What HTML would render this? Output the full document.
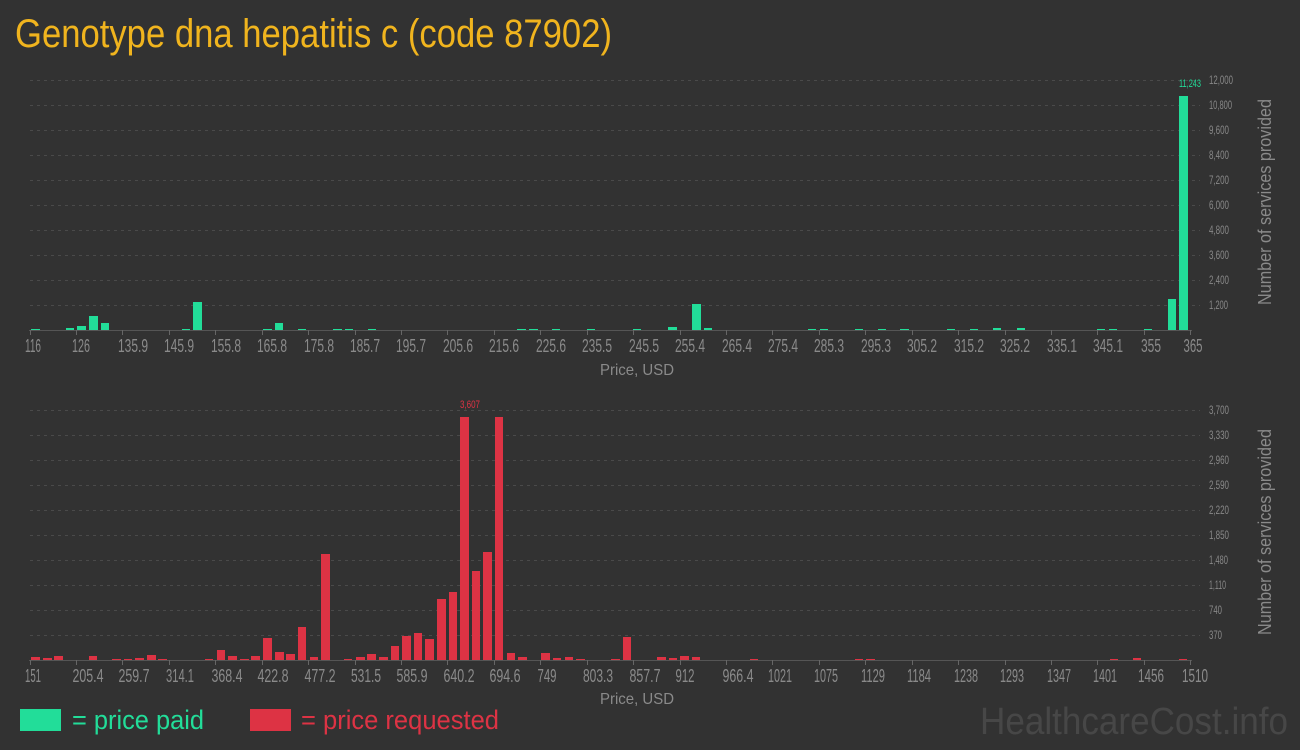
<!DOCTYPE html>
<html><head><meta charset="utf-8"><style>
html,body{margin:0;padding:0;background:#323232;}
svg{display:block}
text{font-family:"Liberation Sans",sans-serif;}
</style></head><body>
<svg width="1300" height="750" xmlns="http://www.w3.org/2000/svg">
<rect width="1300" height="750" fill="#323232"/>
<text x="15" y="47" font-size="40" fill="#f0b41e" textLength="597" lengthAdjust="spacingAndGlyphs">Genotype dna hepatitis c (code 87902)</text>

<g stroke="#4a4a4a" stroke-dasharray="3,4" stroke-width="1">
<line x1="30" x2="1200" y1="80.5" y2="80.5"/><line x1="30" x2="1200" y1="105.5" y2="105.5"/><line x1="30" x2="1200" y1="130.5" y2="130.5"/><line x1="30" x2="1200" y1="155.5" y2="155.5"/><line x1="30" x2="1200" y1="180.5" y2="180.5"/><line x1="30" x2="1200" y1="205.5" y2="205.5"/><line x1="30" x2="1200" y1="230.5" y2="230.5"/><line x1="30" x2="1200" y1="255.5" y2="255.5"/><line x1="30" x2="1200" y1="280.5" y2="280.5"/><line x1="30" x2="1200" y1="305.5" y2="305.5"/>
<line x1="30" x2="1200" y1="410.5" y2="410.5"/><line x1="30" x2="1200" y1="435.5" y2="435.5"/><line x1="30" x2="1200" y1="460.5" y2="460.5"/><line x1="30" x2="1200" y1="485.5" y2="485.5"/><line x1="30" x2="1200" y1="510.5" y2="510.5"/><line x1="30" x2="1200" y1="535.5" y2="535.5"/><line x1="30" x2="1200" y1="560.5" y2="560.5"/><line x1="30" x2="1200" y1="585.5" y2="585.5"/><line x1="30" x2="1200" y1="610.5" y2="610.5"/><line x1="30" x2="1200" y1="635.5" y2="635.5"/>
</g>

<g stroke="#555" stroke-width="1">
<line x1="29" x2="1192" y1="330.5" y2="330.5"/><line x1="29" x2="1192" y1="660.5" y2="660.5"/>
</g>
<g stroke="#666" stroke-width="1">
<path d="M30.5 330v5M76.5 330v5M122.5 330v5M169.5 330v5M215.5 330v5M262.5 330v5M308.5 330v5M355.5 330v5M401.5 330v5M447.5 330v5M494.5 330v5M540.5 330v5M587.5 330v5M633.5 330v5M680.5 330v5M726.5 330v5M772.5 330v5M819.5 330v5M865.5 330v5M912.5 330v5M958.5 330v5M1005.5 330v5M1051.5 330v5M1097.5 330v5M1144.5 330v5M1190.5 330v5"/>
<path d="M30.5 660v5M76.5 660v5M122.5 660v5M169.5 660v5M215.5 660v5M262.5 660v5M308.5 660v5M355.5 660v5M401.5 660v5M447.5 660v5M494.5 660v5M540.5 660v5M587.5 660v5M633.5 660v5M680.5 660v5M726.5 660v5M772.5 660v5M819.5 660v5M865.5 660v5M912.5 660v5M958.5 660v5M1005.5 660v5M1051.5 660v5M1097.5 660v5M1144.5 660v5M1190.5 660v5"/>
</g>

<g fill="#22dd99">
<rect x="31" y="329" width="9" height="1"/><rect x="66" y="328" width="8" height="2"/><rect x="77" y="326" width="9" height="4"/><rect x="89" y="316" width="9" height="14"/><rect x="101" y="323" width="8" height="7"/>
<rect x="182" y="329" width="8" height="1"/><rect x="193" y="302" width="9" height="28"/><rect x="263" y="329" width="9" height="1"/><rect x="275" y="323" width="8" height="7"/><rect x="298" y="329" width="8" height="1"/>
<rect x="333" y="329" width="9" height="1"/><rect x="345" y="329" width="8" height="1"/><rect x="368" y="329" width="8" height="1"/>
<rect x="517" y="329" width="9" height="1"/><rect x="529" y="329" width="9" height="1"/><rect x="552" y="329" width="8" height="1"/><rect x="587" y="329" width="8" height="1"/><rect x="633" y="329" width="8" height="1"/>
<rect x="668" y="327" width="9" height="3"/><rect x="692" y="304" width="9" height="26"/><rect x="704" y="328" width="8" height="2"/>
<rect x="808" y="329" width="8" height="1"/><rect x="820" y="329" width="8" height="1"/><rect x="855" y="329" width="8" height="1"/><rect x="878" y="329" width="8" height="1"/><rect x="900" y="329" width="9" height="1"/><rect x="947" y="329" width="8" height="1"/><rect x="970" y="329" width="8" height="1"/><rect x="993" y="328" width="8" height="2"/><rect x="1017" y="328" width="8" height="2"/><rect x="1097" y="329" width="8" height="1"/><rect x="1109" y="329" width="8" height="1"/><rect x="1144" y="329" width="8" height="1"/>
<rect x="1168" y="299" width="8" height="31"/><rect x="1179" y="96" width="9" height="234"/>
</g>
<text x="1190" y="87" font-size="11" fill="#22dd99" text-anchor="middle" textLength="22" lengthAdjust="spacingAndGlyphs">11,243</text>

<g fill="#dd3344">
<rect x="31" y="657" width="9" height="3"/><rect x="43" y="658" width="9" height="2"/><rect x="54" y="656" width="9" height="4"/><rect x="89" y="656" width="8" height="4"/><rect x="112" y="659" width="9" height="1"/><rect x="124" y="659" width="8" height="1"/><rect x="135" y="658" width="9" height="2"/><rect x="147" y="655" width="9" height="5"/><rect x="158" y="659" width="9" height="1"/>
<rect x="205" y="659" width="8" height="1"/><rect x="217" y="650" width="8" height="10"/><rect x="228" y="656" width="9" height="4"/><rect x="240" y="659" width="9" height="1"/><rect x="251" y="656" width="9" height="4"/><rect x="263" y="638" width="9" height="22"/><rect x="275" y="652" width="9" height="8"/><rect x="286" y="654" width="9" height="6"/><rect x="298" y="627" width="8" height="33"/><rect x="310" y="657" width="8" height="3"/><rect x="321" y="554" width="9" height="106"/>
<rect x="344" y="659" width="8" height="1"/><rect x="356" y="657" width="9" height="3"/><rect x="367" y="654" width="9" height="6"/><rect x="379" y="657" width="9" height="3"/><rect x="391" y="646" width="8" height="14"/><rect x="402" y="636" width="9" height="24"/><rect x="414" y="633" width="8" height="27"/><rect x="425" y="639" width="9" height="21"/><rect x="437" y="599" width="9" height="61"/><rect x="449" y="592" width="8" height="68"/><rect x="460" y="417" width="9" height="243"/><rect x="472" y="571" width="8" height="89"/><rect x="483" y="552" width="9" height="108"/><rect x="495" y="417" width="8" height="243"/><rect x="507" y="653" width="8" height="7"/><rect x="518" y="657" width="9" height="3"/>
<rect x="541" y="653" width="9" height="7"/><rect x="553" y="658" width="8" height="2"/><rect x="565" y="657" width="8" height="3"/><rect x="576" y="659" width="9" height="1"/><rect x="611" y="659" width="9" height="1"/><rect x="623" y="637" width="8" height="23"/><rect x="657" y="657" width="9" height="3"/><rect x="669" y="658" width="8" height="2"/><rect x="680" y="656" width="9" height="4"/><rect x="692" y="657" width="8" height="3"/>
<rect x="750" y="659" width="8" height="1"/><rect x="855" y="659" width="8" height="1"/><rect x="866" y="659" width="9" height="1"/><rect x="1110" y="659" width="8" height="1"/><rect x="1133" y="658" width="8" height="2"/><rect x="1179" y="659" width="8" height="1"/>
</g>
<text x="470" y="408" font-size="11" fill="#dd3344" text-anchor="middle" textLength="20" lengthAdjust="spacingAndGlyphs">3,607</text>

<g font-size="18" fill="#8a8a8a" text-anchor="middle">
<text x="33" y="352" textLength="16" lengthAdjust="spacingAndGlyphs">116</text>
<text x="81" y="352" textLength="18" lengthAdjust="spacingAndGlyphs">126</text>
<text x="133" y="352" textLength="30" lengthAdjust="spacingAndGlyphs">135.9</text>
<text x="179" y="352" textLength="30" lengthAdjust="spacingAndGlyphs">145.9</text>
<text x="226" y="352" textLength="30" lengthAdjust="spacingAndGlyphs">155.8</text>
<text x="272" y="352" textLength="30" lengthAdjust="spacingAndGlyphs">165.8</text>
<text x="319" y="352" textLength="30" lengthAdjust="spacingAndGlyphs">175.8</text>
<text x="365" y="352" textLength="30" lengthAdjust="spacingAndGlyphs">185.7</text>
<text x="411" y="352" textLength="30" lengthAdjust="spacingAndGlyphs">195.7</text>
<text x="458" y="352" textLength="30" lengthAdjust="spacingAndGlyphs">205.6</text>
<text x="504" y="352" textLength="30" lengthAdjust="spacingAndGlyphs">215.6</text>
<text x="551" y="352" textLength="30" lengthAdjust="spacingAndGlyphs">225.6</text>
<text x="597" y="352" textLength="30" lengthAdjust="spacingAndGlyphs">235.5</text>
<text x="644" y="352" textLength="30" lengthAdjust="spacingAndGlyphs">245.5</text>
<text x="690" y="352" textLength="30" lengthAdjust="spacingAndGlyphs">255.4</text>
<text x="737" y="352" textLength="30" lengthAdjust="spacingAndGlyphs">265.4</text>
<text x="783" y="352" textLength="30" lengthAdjust="spacingAndGlyphs">275.4</text>
<text x="829" y="352" textLength="30" lengthAdjust="spacingAndGlyphs">285.3</text>
<text x="876" y="352" textLength="30" lengthAdjust="spacingAndGlyphs">295.3</text>
<text x="922" y="352" textLength="30" lengthAdjust="spacingAndGlyphs">305.2</text>
<text x="969" y="352" textLength="30" lengthAdjust="spacingAndGlyphs">315.2</text>
<text x="1015" y="352" textLength="30" lengthAdjust="spacingAndGlyphs">325.2</text>
<text x="1062" y="352" textLength="30" lengthAdjust="spacingAndGlyphs">335.1</text>
<text x="1108" y="352" textLength="30" lengthAdjust="spacingAndGlyphs">345.1</text>
<text x="1151" y="352" textLength="20" lengthAdjust="spacingAndGlyphs">355</text>
<text x="1193" y="352" textLength="19" lengthAdjust="spacingAndGlyphs">365</text>

<text x="33" y="682" textLength="16" lengthAdjust="spacingAndGlyphs">151</text>
<text x="88" y="682" textLength="31" lengthAdjust="spacingAndGlyphs">205.4</text>
<text x="134" y="682" textLength="31" lengthAdjust="spacingAndGlyphs">259.7</text>
<text x="180" y="682" textLength="28" lengthAdjust="spacingAndGlyphs">314.1</text>
<text x="227" y="682" textLength="31" lengthAdjust="spacingAndGlyphs">368.4</text>
<text x="273" y="682" textLength="31" lengthAdjust="spacingAndGlyphs">422.8</text>
<text x="320" y="682" textLength="31" lengthAdjust="spacingAndGlyphs">477.2</text>
<text x="366" y="682" textLength="30" lengthAdjust="spacingAndGlyphs">531.5</text>
<text x="412" y="682" textLength="31" lengthAdjust="spacingAndGlyphs">585.9</text>
<text x="459" y="682" textLength="31" lengthAdjust="spacingAndGlyphs">640.2</text>
<text x="505" y="682" textLength="31" lengthAdjust="spacingAndGlyphs">694.6</text>
<text x="547" y="682" textLength="19" lengthAdjust="spacingAndGlyphs">749</text>
<text x="598" y="682" textLength="30" lengthAdjust="spacingAndGlyphs">803.3</text>
<text x="645" y="682" textLength="31" lengthAdjust="spacingAndGlyphs">857.7</text>
<text x="685" y="682" textLength="19" lengthAdjust="spacingAndGlyphs">912</text>
<text x="738" y="682" textLength="31" lengthAdjust="spacingAndGlyphs">966.4</text>
<text x="780" y="682" textLength="24" lengthAdjust="spacingAndGlyphs">1021</text>
<text x="826" y="682" textLength="24" lengthAdjust="spacingAndGlyphs">1075</text>
<text x="873" y="682" textLength="24" lengthAdjust="spacingAndGlyphs">1129</text>
<text x="919" y="682" textLength="24" lengthAdjust="spacingAndGlyphs">1184</text>
<text x="966" y="682" textLength="24" lengthAdjust="spacingAndGlyphs">1238</text>
<text x="1012" y="682" textLength="24" lengthAdjust="spacingAndGlyphs">1293</text>
<text x="1059" y="682" textLength="24" lengthAdjust="spacingAndGlyphs">1347</text>
<text x="1105" y="682" textLength="24" lengthAdjust="spacingAndGlyphs">1401</text>
<text x="1151" y="682" textLength="26" lengthAdjust="spacingAndGlyphs">1456</text>
<text x="1195" y="682" textLength="26" lengthAdjust="spacingAndGlyphs">1510</text>
</g>

<g font-size="16" fill="#8a8a8a" text-anchor="middle">
<text x="637" y="375" textLength="74" lengthAdjust="spacingAndGlyphs">Price, USD</text>
<text x="637" y="704" textLength="74" lengthAdjust="spacingAndGlyphs">Price, USD</text>
<text transform="translate(1271,202) rotate(-90)" font-size="18" textLength="206" lengthAdjust="spacingAndGlyphs">Number of services provided</text>
<text transform="translate(1271,532) rotate(-90)" font-size="18" textLength="206" lengthAdjust="spacingAndGlyphs">Number of services provided</text>
</g>

<g font-size="12" fill="#888">
<text x="1209" y="84" textLength="24" lengthAdjust="spacingAndGlyphs">12,000</text>
<text x="1209" y="109" textLength="23" lengthAdjust="spacingAndGlyphs">10,800</text>
<text x="1209" y="134" textLength="20" lengthAdjust="spacingAndGlyphs">9,600</text>
<text x="1209" y="159" textLength="20" lengthAdjust="spacingAndGlyphs">8,400</text>
<text x="1209" y="184" textLength="20" lengthAdjust="spacingAndGlyphs">7,200</text>
<text x="1209" y="209" textLength="20" lengthAdjust="spacingAndGlyphs">6,000</text>
<text x="1209" y="234" textLength="20" lengthAdjust="spacingAndGlyphs">4,800</text>
<text x="1209" y="259" textLength="20" lengthAdjust="spacingAndGlyphs">3,600</text>
<text x="1209" y="284" textLength="20" lengthAdjust="spacingAndGlyphs">2,400</text>
<text x="1209" y="309" textLength="19" lengthAdjust="spacingAndGlyphs">1,200</text>
<text x="1209" y="414" textLength="20" lengthAdjust="spacingAndGlyphs">3,700</text>
<text x="1209" y="439" textLength="20" lengthAdjust="spacingAndGlyphs">3,330</text>
<text x="1209" y="464" textLength="20" lengthAdjust="spacingAndGlyphs">2,960</text>
<text x="1209" y="489" textLength="20" lengthAdjust="spacingAndGlyphs">2,590</text>
<text x="1209" y="514" textLength="20" lengthAdjust="spacingAndGlyphs">2,220</text>
<text x="1209" y="539" textLength="20" lengthAdjust="spacingAndGlyphs">1,850</text>
<text x="1209" y="564" textLength="19" lengthAdjust="spacingAndGlyphs">1,480</text>
<text x="1209" y="589" textLength="17" lengthAdjust="spacingAndGlyphs">1,110</text>
<text x="1209" y="614" textLength="13" lengthAdjust="spacingAndGlyphs">740</text>
<text x="1209" y="639" textLength="13" lengthAdjust="spacingAndGlyphs">370</text>
</g>

<rect x="20" y="709" width="41" height="22" fill="#22dd99"/>
<text x="72" y="729" font-size="27" fill="#22dd99" textLength="132" lengthAdjust="spacingAndGlyphs">= price paid</text>
<rect x="250" y="709" width="41" height="22" fill="#dd3344"/>
<text x="301" y="729" font-size="27" fill="#dd3344" textLength="198" lengthAdjust="spacingAndGlyphs">= price requested</text>
<text x="980" y="734" font-size="38" fill="#474747" textLength="308" lengthAdjust="spacingAndGlyphs">HealthcareCost.info</text>
</svg>
</body></html>
